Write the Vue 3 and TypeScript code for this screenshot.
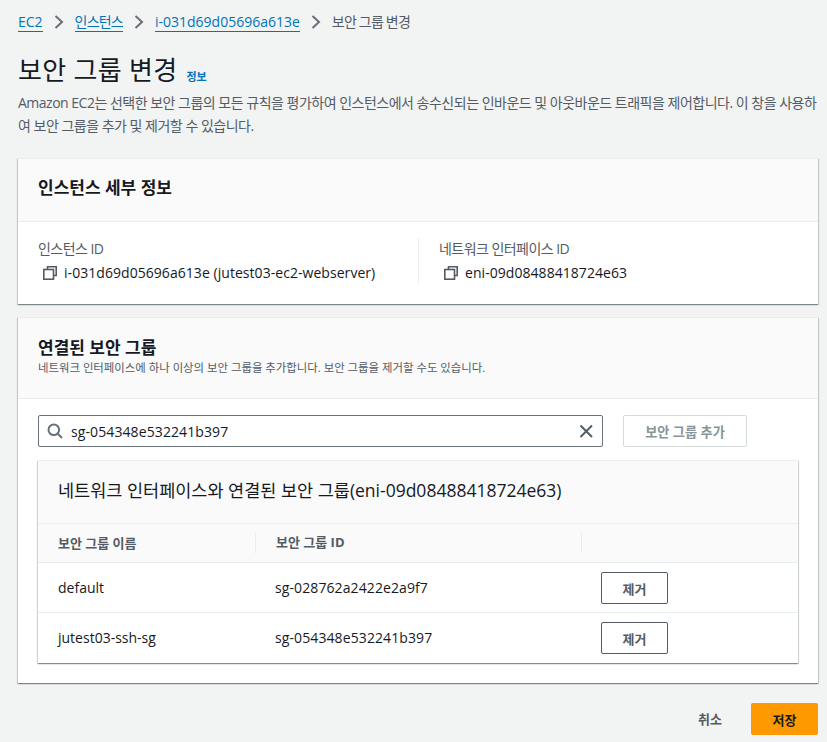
<script setup lang="ts">
const crumbs = [
  { label: 'EC2', link: true, ko: false },
  { label: '인스턴스', link: true, ko: true },
  { label: 'i-031d69d05696a613e', link: true, ko: false },
  { label: '보안 그룹 변경', link: false, ko: true },
]
const details = [
  { label: '인스턴스 ID', value: 'i-031d69d05696a613e (jutest03-ec2-webserver)' },
  { label: '네트워크 인터페이스 ID', value: 'eni-09d08488418724e63' },
]
const rows = [
  { name: 'default', id: 'sg-028762a2422e2a9f7' },
  { name: 'jutest03-ssh-sg', id: 'sg-054348e532241b397' },
]
</script>

<template>
  <div class="page">
    <nav class="crumbs">
      <template v-for="(c, i) in crumbs" :key="c.label">
        <a v-if="c.link" class="crumb-link" :class="{ ko: c.ko }">{{ c.label }}</a>
        <span v-else class="crumb-text ko">{{ c.label }}</span>
        <svg v-if="i < crumbs.length - 1" class="chev" width="10" height="14" viewBox="0 0 10 14">
          <path d="M1.5 1 L8 7 L1.5 13" fill="none" stroke="#687078" stroke-width="2" />
        </svg>
      </template>
    </nav>

    <header class="head">
      <div class="title-row">
        <h1>보안 그룹 변경</h1>
        <a class="info">정보</a>
      </div>
      <p class="desc">Amazon EC2는 선택한 보안 그룹의 모든 규칙을 평가하여 인스턴스에서 송수신되는 인바운드 및 아웃바운드 트래픽을 제어합니다. 이 창을 사용하여 보안 그룹을 추가 및 제거할 수 있습니다.</p>
    </header>

    <section class="card first">
      <div class="card-head small">
        <h2>인스턴스 세부 정보</h2>
      </div>
      <div class="details">
        <div v-for="d in details" :key="d.label" class="detail">
          <div class="detail-label">{{ d.label }}</div>
          <div class="detail-value">
            <svg width="16" height="16" viewBox="0 0 16 16" fill="none" stroke="#545b64" stroke-width="1.6">
              <path d="M5.5 4.5 V1.8 H14.2 V10.5 H11.5" />
              <rect x="1.8" y="4.5" width="9.7" height="9.7" />
            </svg>
            <span>{{ d.value }}</span>
          </div>
        </div>
      </div>
    </section>

    <section class="card second">
      <div class="card-head large">
        <h2>연결된 보안 그룹</h2>
        <p>네트워크 인터페이스에 하나 이상의 보안 그룹을 추가합니다. 보안 그룹을 제거할 수도 있습니다.</p>
      </div>
      <div class="card-body">
        <div class="search-row">
          <div class="search">
            <svg width="16" height="16" viewBox="0 0 16 16" fill="none" stroke="#687078" stroke-width="2">
              <circle cx="6.8" cy="6.8" r="5.3" />
              <path d="M10.8 10.8 L15 15" />
            </svg>
            <span class="search-value">sg-054348e532241b397</span>
            <svg width="16" height="16" viewBox="0 0 16 16" fill="none" stroke="#545b64" stroke-width="2">
              <path d="M2.5 2.5 L14 14 M14 2.5 L2.5 14" />
            </svg>
          </div>
          <button class="btn-disabled" type="button">보안 그룹 추가</button>
        </div>

        <div class="inner">
          <div class="inner-title">네트워크 인터페이스와 연결된 보안 그룹(eni-09d08488418724e63)</div>
          <div class="grid grid-head">
            <div class="cell text">보안 그룹 이름</div>
            <div class="cell sep">보안 그룹 ID</div>
            <div class="cell sep"></div>
          </div>
          <div v-for="r in rows" :key="r.id" class="grid grid-row">
            <div class="cell text">{{ r.name }}</div>
            <div class="cell text mono">{{ r.id }}</div>
            <div class="cell action"><button class="btn-normal" type="button">제거</button></div>
          </div>
        </div>
      </div>
    </section>

    <footer class="foot">
      <button class="btn-link" type="button">취소</button>
      <button class="btn-primary" type="button">저장</button>
    </footer>
  </div>
</template>

<style>
html, body { margin: 0; background: #f2f3f3; }
</style>

<style scoped>
.page {
  box-sizing: border-box;
  width: 827px;
  height: 742px;
  overflow: hidden;
  padding: 12px 9px 0 18px;
  background: #f2f3f3;
  color: #16191f;
  font-family: "Open Sans", "Noto Sans CJK KR", sans-serif;
  font-size: 14px;
}
.crumbs {
  display: flex;
  align-items: center;
  height: 20px;
  gap: 11px;
  font-size: 14px;
  line-height: 20px;
}
.crumb-link { color: #0073bb; border-bottom: 1px solid #0073bb; line-height: 19px; }
.crumb-text { color: #545b64; }
.ko { letter-spacing: -0.8px; }
.chev { flex: none; }
.head { margin-top: 12px; }
.title-row { display: flex; align-items: flex-end; gap: 9px; height: 50px; }
h1 { margin: 0; font-size: 26px; font-weight: 400; line-height: 48px; letter-spacing: 0.3px; }
.info { color: #0073bb; font-size: 11px; font-weight: 700; line-height: 14px; margin-bottom: 10px; }
.desc { margin: -3px 0 0; color: #545b64; line-height: 23px; letter-spacing: -0.5px; }
.card {
  box-sizing: border-box;
  background: #fff;
  box-shadow: 0 1px 1px 0 rgba(0, 28, 36, 0.3), 1px 1px 1px 0 rgba(0, 28, 36, 0.15), -1px 1px 1px 0 rgba(0, 28, 36, 0.15);
  border-top: 1px solid #eaeded;
}
.first { margin-top: 21px; height: 146px; }
.second { margin-top: 13px; height: 366px; }
.card-head { background: #fafafa; border-bottom: 1px solid #eaeded; padding-left: 20px; box-sizing: border-box; }
.card-head.small { height: 63px; display: flex; align-items: center; padding-bottom: 4px; }
.card-head.large { height: 81px; padding-top: 19px; }
h2 { margin: 0; font-size: 17px; font-weight: 700; line-height: 22px; }
.card-head p { margin: 1px 0 0; font-size: 11.4px; line-height: 16px; color: #545b64; }
.details { display: grid; grid-template-columns: 400px 1fr; padding-top: 16px; }
.detail { padding-left: 20px; height: 46px; }
.detail + .detail { border-left: 1px solid #eaeded; }
.detail-label { color: #545b64; line-height: 22px; letter-spacing: -0.55px; }
.detail-value { display: flex; align-items: center; gap: 6px; line-height: 26px; padding-left: 4px; letter-spacing: 0.05px; }
.detail-value svg { flex: none; width: 16px; }
.card-body { padding: 16px 20px 0; }
.search-row { display: flex; gap: 20px; }
.search {
  box-sizing: border-box;
  width: 565px;
  height: 32px;
  display: flex;
  align-items: center;
  gap: 8px;
  padding: 0 8px;
  background: #fff;
  border: 1px solid #687078;
  border-radius: 2px;
}
.search-value { flex: 1; letter-spacing: 0.1px; }
.btn-disabled {
  box-sizing: border-box;
  width: 124px;
  height: 32px;
  background: #fff;
  border: 1px solid #d5dbdb;
  border-radius: 2px;
  color: #879596;
  font: inherit;
  font-weight: 700;
  font-size: 13.2px;
}
.inner {
  margin-top: 13px;
  height: 203px;
  background: #fff;
  box-sizing: border-box;
  border-top: 1px solid #eaeded;
  box-shadow: 0 1px 1px 0 rgba(0, 28, 36, 0.3), 1px 1px 1px 0 rgba(0, 28, 36, 0.15), -1px 1px 1px 0 rgba(0, 28, 36, 0.15);
}
.inner-title {
  box-sizing: border-box;
  height: 63px;
  display: flex;
  align-items: center;
  padding-left: 20px;
  padding-bottom: 5px;
  background: #fafafa;
  border-bottom: 1px solid #eaeded;
  font-size: 17.5px;
}
.grid { display: grid; grid-template-columns: 217px 326px 1fr; align-items: center; box-sizing: border-box; }
.grid-head {
  height: 39px;
  background: #fafafa;
  border-bottom: 1px solid #eaeded;
  color: #545b64;
  font-weight: 700;
  font-size: 13px;
}
.grid-row { height: 50px; border-bottom: 1px solid #eaeded; padding-top: 1px; }
.grid-row:last-child { border-bottom: 0; padding-top: 0; }
.cell { padding-left: 20px; color: #16191f; }
.text { padding-bottom: 2px; }
.mono { letter-spacing: 0.1px; }
.grid-head .cell { color: #545b64; }
.sep { border-left: 1px solid #eaeded; height: 20px; line-height: 18px; }
.btn-normal {
  box-sizing: border-box;
  display: block;
  width: 67px;
  height: 32px;
  background: #fff;
  border: 1px solid #545b64;
  border-radius: 2px;
  color: #545b64;
  font: inherit;
  font-weight: 700;
  font-size: 13px;
}
.foot { display: flex; justify-content: flex-end; align-items: center; gap: 29px; margin-top: 20px; }
.btn-link { background: none; border: 0; padding: 0 0 2px; color: #545b64; font: inherit; font-weight: 700; font-size: 13px; }
.btn-primary {
  box-sizing: border-box;
  width: 67px;
  height: 32px;
  background: #ff9900;
  border: 0;
  border-radius: 2px;
  color: #16191f;
  font: inherit;
  font-weight: 700;
  font-size: 13px;
}
</style>
